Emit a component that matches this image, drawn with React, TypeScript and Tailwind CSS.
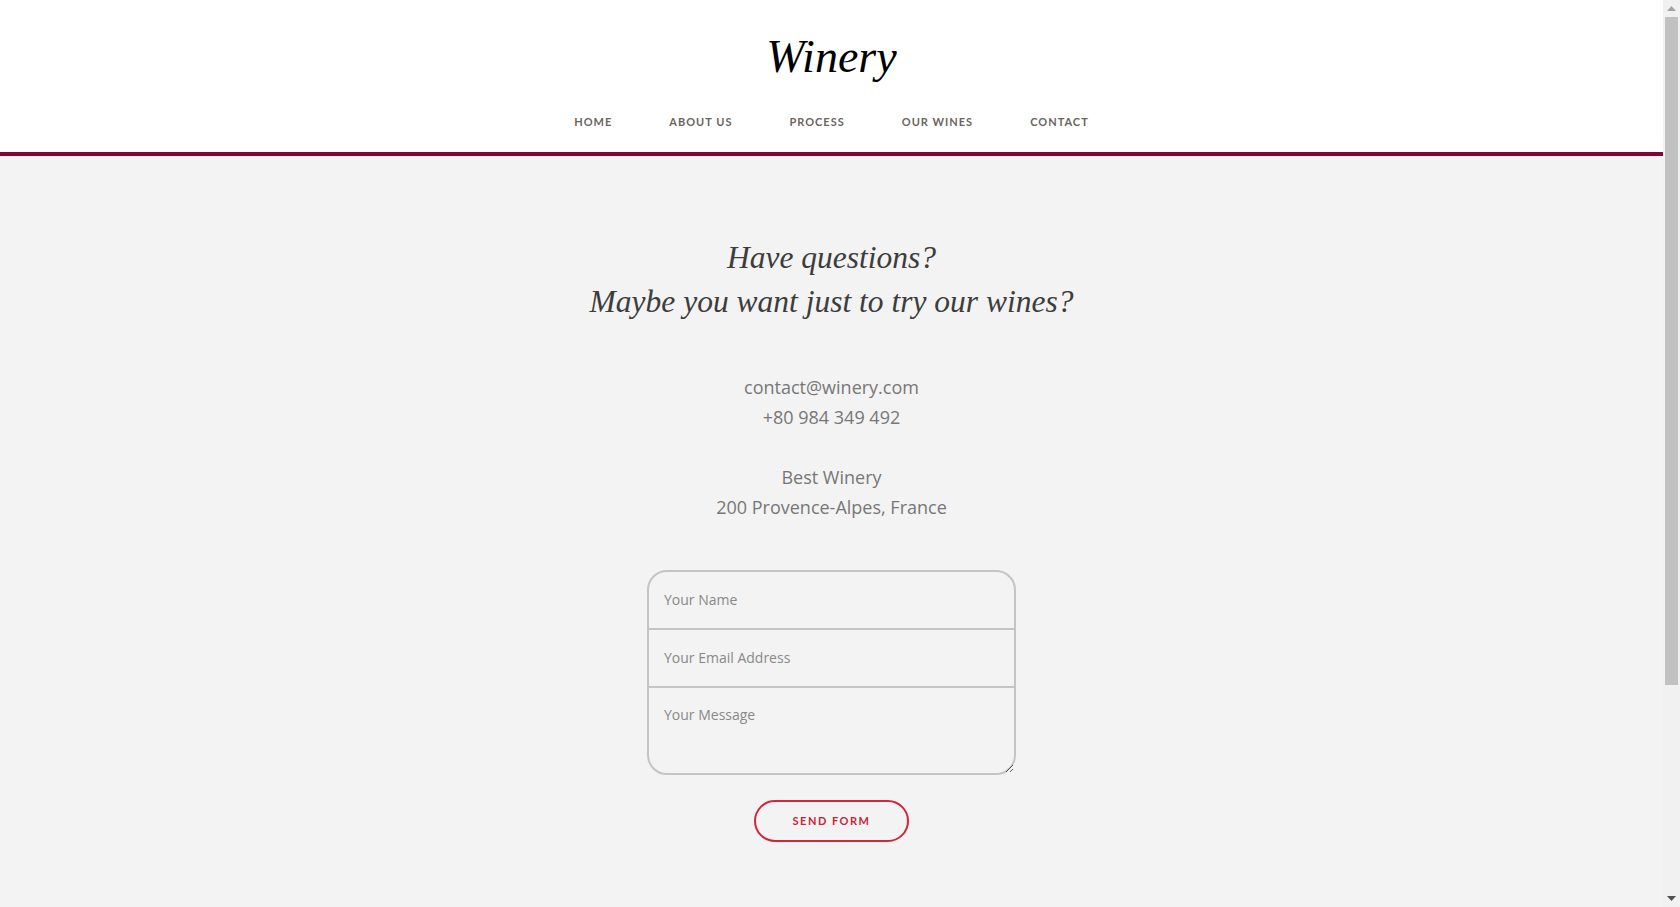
const navItems = ["HOME", "ABOUT US", "PROCESS", "OUR WINES", "CONTACT"];

function Arrow({ down, color }: { down?: boolean; color: string }) {
  return (
    <div className="h-[17px] flex items-center justify-center">
      <svg width="9" height="5" viewBox="0 0 9 5">
        <path d={down ? "M0 0 H9 L4.5 5 Z" : "M0 5 H9 L4.5 0 Z"} fill={color} />
      </svg>
    </div>
  );
}

export default function App() {
  return (
    <div className="h-screen flex bg-[#f3f3f3] font-['Open_Sans',sans-serif]">
      <div className="flex-1 min-w-0 overflow-hidden">
        <header className="flex flex-col items-center bg-white border-b-4 border-[#7d0634]">
          <h1 className="pt-[30px] text-[46px] leading-[54px] italic text-black font-['Liberation_Serif',serif]">
            Winery
          </h1>
          <nav className="mt-[30px] pb-[22px] flex gap-[57px]">
            {navItems.map((item) => (
              <a
                key={item}
                href="#"
                className="text-[11px] leading-4 font-bold tracking-[1px] text-[#6b6460] font-['Lato',sans-serif]"
              >
                {item}
              </a>
            ))}
          </nav>
        </header>

        <main className="flex flex-col items-center pt-[80px] pb-[344px]">
          <h2 className="text-center text-[31.5px] leading-[44px] italic text-[#3d3d3d] font-['Liberation_Serif',serif]">
            Have questions?
            <br />
            Maybe you want just to try our wines?
          </h2>

          <div className="mt-[48px] text-center text-[18px] leading-[30px] text-[#777]">
            <p>contact@winery.com</p>
            <p>+80 984 349 492</p>
            <p className="mt-[30px]">Best Winery</p>
            <p>200 Provence-Alpes, France</p>
          </div>

          <form className="mt-[48px] flex flex-col items-center" onSubmit={(e) => e.preventDefault()}>
            <div className="w-[369px] flex flex-col border-2 border-[#c4c4c4] rounded-[20px]">
              <input
                type="text"
                placeholder="Your Name"
                className="h-[58px] px-[15px] pb-[2px] rounded-t-[18px] bg-transparent text-[14px] text-[#555] placeholder:text-[#888] outline-none border-b-2 border-[#c4c4c4]"
              />
              <input
                type="email"
                placeholder="Your Email Address"
                className="h-[58px] px-[15px] pb-[2px] bg-transparent text-[14px] text-[#555] placeholder:text-[#888] outline-none border-b-2 border-[#c4c4c4]"
              />
              <textarea
                placeholder="Your Message"
                className="h-[85px] px-[15px] pt-[17px] rounded-b-[18px] bg-transparent text-[14px] leading-5 text-[#555] placeholder:text-[#888] outline-none"
              />
            </div>
            <button
              type="submit"
              className="mt-[25px] w-[155px] h-[42px] rounded-full border-2 border-[#d0263c] text-[11px] font-bold tracking-[1.5px] text-[#c9243a] font-['Lato',sans-serif]"
            >
              SEND FORM
            </button>
          </form>
        </main>
      </div>

      {/* page scrollbar */}
      <div className="w-[17px] shrink-0 flex flex-col bg-[#f1f1f1]">
        <Arrow color="#a3a3a3" />
        <div className="h-[668px] mx-[2px] bg-[#c1c1c1]" />
        <div className="flex-1" />
        <Arrow down color="#505050" />
      </div>
    </div>
  );
}
